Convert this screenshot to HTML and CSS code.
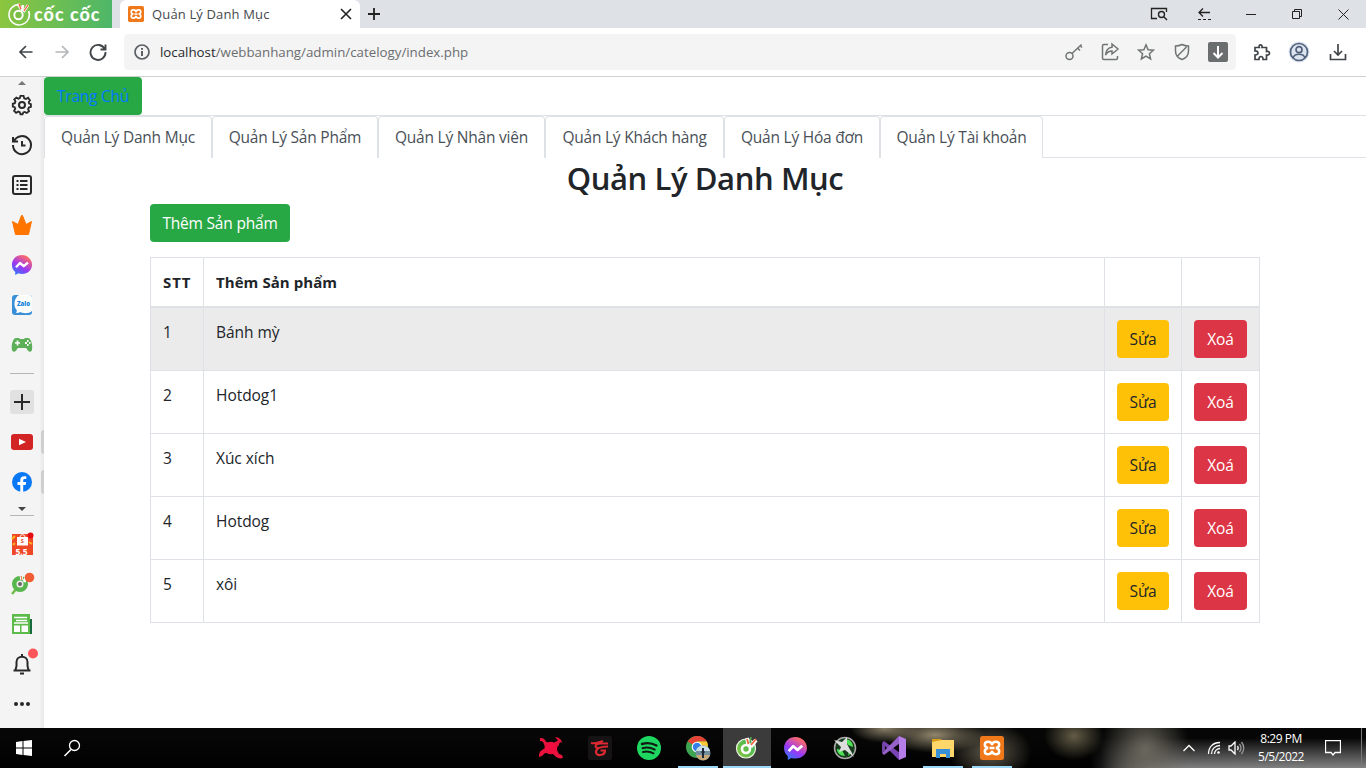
FILE: index.html
```html
<!DOCTYPE html>
<html lang="vi">
<head>
<meta charset="utf-8">
<title>Quản Lý Danh Mục</title>
<link rel="stylesheet" href="styles.css">
</head>
<body>
<svg class="defs" aria-hidden="true">
  <defs>
    <linearGradient id="msg" x1="0" y1="1" x2=".6" y2="0"><stop offset="0" stop-color="#1688ff"/><stop offset=".5" stop-color="#9a38f5"/><stop offset="1" stop-color="#ff6a68"/></linearGradient>
    <linearGradient id="leaf" x1="0" y1="1" x2="1" y2="0"><stop offset="0" stop-color="#8bc83e"/><stop offset="1" stop-color="#35b15b"/></linearGradient>
  </defs>
  <symbol id="messenger" viewBox="0 0 24 24"><path fill="url(#msg)" d="M12 1C5.700 1 1 5.600 1 11.600c0 3.400 1.400 6 3.600 7.900V23l3.500-1.900c1.200.4 2.500.6 3.900.6 6.300 0 11-4.500 11-10.100S18.300 1 12 1z"/><path fill="none" stroke="#fff" stroke-width="2.600" stroke-linejoin="round" d="M5.500 14.500l4.300-4.700 4.100 3.500 4.600-4"/></symbol>
  <symbol id="xampp" viewBox="0 0 24 24"><rect width="24" height="24" rx="2.500" fill="#f07819"/><path fill="none" stroke="#fff" stroke-width="2.500" d="M8 12C3.500 11 4 5.800 8 5.800c2.800 0 4 1.500 4 3.400 0-1.900 1.200-3.400 4-3.400 4 0 4.500 5.200 0 6.200 4.500 1 4 6.200 0 6.200-2.800 0-4-1.500-4-3.400 0 1.900-1.200 3.400-4 3.400-4 0-4.500-5.200 0-6.200zM9.500 12h5"/></symbol>
</svg>

<header class="tabstrip">
  <div class="brand">
    <svg width="26" height="26" viewBox="0 0 26 26"><path d="M14 3.500A10.200 10.200 0 1 0 22.700 10" fill="none" stroke="#fff" stroke-width="1.500"/><circle cx="12.500" cy="14" r="6.700" fill="#7abe46"/><circle cx="12.500" cy="14" r="4.200" fill="none" stroke="#fff" stroke-width="2"/><path d="M12 3l3 5M17 4l-1 6M22 4l-4.500 7" stroke="#fff" stroke-width="2.600"/><path d="M13 3l2 5M22 4l-4 6" stroke="#f15a3c" stroke-width="1.300"/></svg>
    <span class="brand-name">cốc cốc</span>
  </div>
  <div class="tab">
    <svg width="16" height="16"><use href="#xampp"/></svg>
    <span class="tab-title">Quản Lý Danh Mục</span>
    <svg class="line" width="12" height="12" viewBox="0 0 12 12"><path d="M1 1l10 10M11 1L1 11" stroke-width="1.600"/></svg>
  </div>
  <svg class="line newtab" width="14" height="14" viewBox="0 0 14 14"><path d="M7 1v12M1 7h12" stroke-width="1.800"/></svg>
  <div class="window-controls">
    <svg class="line" width="18" height="14" viewBox="0 0 18 14"><path d="M7 11.500H1.500v-10h15V5" stroke-width="1.300"/><circle cx="11.500" cy="7.500" r="3" stroke-width="1.400"/><path d="M14 10l3 3" stroke-width="1.400"/></svg>
    <svg class="line" width="16" height="14" viewBox="0 0 16 14"><path d="M13 5.500H2M6 1.500l-4 4 4 4" stroke-width="1.300"/><path d="M1 12.500h13" stroke-dasharray="3 2"/></svg>
    <svg class="line" width="10" height="10" viewBox="0 0 10 10"><path d="M0 5.500h10"/></svg>
    <svg class="line" width="10" height="10" viewBox="0 0 10 10"><path d="M.5 2.500h7v7h-7zM2.500 2.500v-2h7v7h-2"/></svg>
    <svg class="line" width="11" height="11" viewBox="0 0 11 11"><path d="M.5.500l10 10M10.500.500l-10 10"/></svg>
  </div>
</header>

<nav class="toolbar">
  <svg class="tool" width="16" height="16" viewBox="0 0 16 16"><path d="M14.500 8H2M8 2L2 8l6 6"/></svg>
  <svg class="tool off" width="16" height="16" viewBox="0 0 16 16"><path d="M1.500 8H14M8 2l6 6-6 6"/></svg>
  <svg class="tool reload" width="18" height="18" viewBox="0 0 18 18"><path d="M15.800 6.200A7.500 7.500 0 1 0 16.500 9M16.500 1.500v5h-5" stroke-width="1.900"/></svg>
  <div class="address">
    <svg class="tool info" width="16" height="16" viewBox="0 0 16 16"><circle cx="8" cy="8" r="7"/><path d="M8 7v5M8 4v1.800" stroke-width="2"/></svg>
    <span class="url"><b>localhost</b>/webbanhang/admin/catelogy/index.php</span>
    <div class="address-icons">
      <svg width="20" height="20" viewBox="0 0 20 20"><circle cx="5.500" cy="14" r="3.500"/><path d="M8 11.500L17.500 2.500M13.500 6l2.500 2.500M16 3.500l2 2"/></svg>
      <svg width="20" height="20" viewBox="0 0 20 20"><path d="M8 2.500H4A1.500 1.500 0 0 0 2.500 4v12A1.500 1.500 0 0 0 4 17.500h12a1.500 1.500 0 0 0 1.500-1.500v-2M12 2l6 5-6 5V9C8.500 9 7 10.500 5.500 13 6 8 8.500 5.500 12 5.200z"/></svg>
      <svg width="20" height="20" viewBox="0 0 20 20"><path d="M10 2.800l2.100 4.900 5.300.5-4 3.500 1.200 5.200L10 14.200l-4.600 2.700 1.200-5.200-4-3.500 5.300-.5z"/></svg>
      <svg width="20" height="20" viewBox="0 0 20 20"><path d="M10 2.500c2 1 4 1.500 6.500 1.500v5c0 4-2.500 7-6.500 8.500C6 16 3.500 13 3.500 9V4C6 4 8 3.500 10 2.500zM14.500 5l-9 9"/></svg>
      <svg width="20" height="20" viewBox="0 0 20 20"><rect width="20" height="20" rx="2" fill="#6a6e6e" stroke="none"/><path d="M10 4v11M5.500 11l4.500 4.500 4.500-4.500" stroke="#fff" stroke-width="2"/></svg>
    </div>
  </div>
  <div class="toolbar-end">
    <svg class="tool" width="20" height="20" viewBox="0 0 20 20"><path d="M3 5.500h4.300C6 2 11 2 10 5.500h4.500v4c4-1 4 4.200 0 3.500v4.500H11c.5-4-4.500-4-4 0H3V13c4 .3 4-4.500 0-4z"/></svg>
    <svg class="tool user" width="22" height="22" viewBox="0 0 22 22"><circle cx="11" cy="11" r="10.500" fill="#dce4f0" stroke="none"/><circle cx="11" cy="11" r="8.500"/><circle cx="11" cy="8.700" r="3"/><path d="M5 17c1.500-5 10.500-5 12 0"/></svg>
    <svg class="tool" width="18" height="18" viewBox="0 0 18 18"><path d="M9 1v11M5 8l4 4 4-4M1.500 11v5.500h15V11"/></svg>
  </div>
</nav>

<div class="workspace">
  <aside class="sidebar">
    <div class="slot up"><svg width="8" height="4" viewBox="0 0 8 4"><path fill="#777" d="M0 4l4-4 4 4z"/></svg></div>
    <div class="slot"><svg class="side" width="22" height="22" viewBox="0 0 22 22"><path d="M9.300 1.500h3.400l.7 2.600 2 .8L17.700 3.500l2 2.800-1.300 2.200.4 1.500 2 .6v3l-2.300.8-.8 1.800 1 2.200-2.500 1.900-2.200-1.200-1.600.6-.8 2H9.300l-.7-2.200-1.800-.7-2.300 1.300-2.200-2.200 1.300-2.300-.7-1.700-2-.7v-3l2.200-.7.7-1.700-1.300-2.300 2.300-2 2.200 1.100 1.600-.6z" transform="translate(1 .5) scale(.91)"/><circle cx="11" cy="11" r="3"/></svg></div>
    <div class="slot"><svg class="side" width="22" height="22" viewBox="0 0 22 22"><path d="M2 3v4.500h5M3 7a9 9 0 1 1-1 4M11 7v4.500h3.500"/></svg></div>
    <div class="slot"><svg class="side" width="22" height="22" viewBox="0 0 22 22"><rect x="2" y="2" width="18" height="18" rx="2"/><path d="M5.500 7h2M9 7h7.500M5.500 11h2M9 11h7.500M5.500 15h2M9 15h7.500"/></svg></div>
    <div class="slot"><svg width="22" height="22" viewBox="0 0 22 22"><path fill="#ff7500" stroke="#ff7500" stroke-linejoin="round" d="M1.500 7.500l5.500 3 3.500-9h1l3.500 9 5.500-3L17.500 20.500h-13z"/></svg></div>
    <div class="slot"><svg width="22" height="22"><use href="#messenger"/></svg></div>
    <div class="slot"><svg width="20" height="20" viewBox="0 0 20 20"><rect width="20" height="20" rx="3" fill="#388fd7"/><path fill="#fff" d="M7 0h10a3 3 0 0 1 3 3v13c-3 3-9 2.500-12 1-2 1.300-3.500 1-4 .8 1-1 1-2 .5-3C1 11 2 3 7 0z"/><text x="5" y="11" font-family="Open Sans" font-size="6" font-weight="800" textLength="13" fill="#1684d8">Zalo</text></svg></div>
    <div class="slot"><svg width="22" height="16" viewBox="0 0 22 16"><path fill="#5daf59" d="M5 1h3l1 1h4l1-1h3c3 0 5 7 4 12-1 3-4 2-5-1l-1-1H7l-1 1c-1 3-4 4-5 1C0 8 2 1 5 1z"/><path stroke="#fff" stroke-width="1.600" d="M4 6h5M6.500 3.500v5"/><path fill="#fff" d="M14 5h2v2h-2zM16 3h1.500v2H16zM16 7h1.500v2H16zM18 5h1.500v2H18z"/></svg></div>
    <div class="slot rule"><hr></div>
    <div class="slot"><div class="plus"><svg class="side" width="16" height="16" viewBox="0 0 16 16"><path d="M8 0v16M0 8h16"/></svg></div></div>
    <div class="slot marked"><svg width="22" height="16" viewBox="0 0 22 16"><rect width="22" height="16" rx="3" fill="#d22325"/><path fill="#fff" d="M8 4.800v6.400L15 8z"/></svg></div>
    <div class="slot marked"><svg width="20" height="20" viewBox="0 0 20 20"><circle cx="10" cy="10" r="10" fill="#0878f4"/><path fill="#fff" d="M8.300 20v-7H5.500v-3h2.800V8c0-3 1.700-4.300 6-3.700V7h-1.500c-1.300 0-1.600.6-1.600 1.500V10h3l-.6 3h-2.400v7z"/></svg></div>
    <div class="slot more"><svg width="8" height="4" viewBox="0 0 8 4"><path fill="#444" d="M0 0h8L4 4z"/></svg><hr></div>
    <div class="slot"><svg width="22" height="24" viewBox="0 0 22 24"><rect x="1" y="1" width="21" height="21" fill="#ee4827"/><path stroke="#ffb21c" stroke-width="2" d="M1 6l3-3M2 12l2-2M18 9l3 2"/><path fill="#fff" d="M6 4h11v8.500H6z"/><path d="M9 4c0-3 5-3 5 0" fill="none" stroke="#fff"/><text x="9.800" y="9.800" font-family="Open Sans" font-size="5.500" font-weight="700" fill="#e4432d">S</text><text x="4.500" y="21.500" font-family="Open Sans" font-size="8.500" font-weight="700" fill="#fff">5.5</text><circle cx="19.500" cy="2.500" r="3" fill="#e50c12"/></svg></div>
    <div class="slot"><svg width="26" height="26" viewBox="0 0 26 26"><path d="M3 22l5-6" stroke="#72bd48" stroke-width="2.500"/><circle cx="11" cy="12" r="5.500" fill="none" stroke="#58b64e" stroke-width="5"/><circle cx="11" cy="12" r="3.500" fill="#eee"/><circle cx="11" cy="12" r="2" fill="#666"/><path d="M12 4l1 4M17 6l-2 4" stroke="#fff" stroke-width="3"/><path d="M12 4l1 4" stroke="#f15e35"/><circle cx="20.500" cy="5.500" r="4.800" fill="#f15e35"/></svg></div>
    <div class="slot"><svg width="20" height="22" viewBox="0 0 20 22"><path fill="#176b3e" d="M17 5h3v15h-3z"/><path fill="#5dbb4c" d="M0 0h18v20H0z"/><path stroke="#fff" stroke-width="1.300" d="M2 3.500h13M4 6.500h11M2 9h14"/><path fill="#fff" d="M2 11.500h6V18H2zM9.500 11.500H16V18H9.500z"/></svg></div>
    <div class="slot"><svg class="side" width="26" height="34" viewBox="0 0 26 34"><path d="M4.500 22.500h17M6.500 22l1-4v-4c0-7 11-7 11 0v4l1 4M13 8V6M11 25.500h4"/><circle cx="24" cy="5.500" r="5" fill="#ff565c" stroke="none"/></svg></div>
    <div class="slot"><svg width="16" height="6" viewBox="0 0 16 6"><g fill="#262626"><circle cx="2" cy="2" r="2"/><circle cx="8" cy="2" r="2"/><circle cx="14" cy="2" r="2"/></g></svg></div>
  </aside>

  <main class="page">
    <a class="btn home">Trang Chủ</a>
    <ul class="nav">
      <li class="w1"><a>Quản Lý Danh Mục</a></li>
      <li class="w2"><a>Quản Lý Sản Phẩm</a></li>
      <li class="w3"><a>Quản Lý Nhân viên</a></li>
      <li class="w4"><a>Quản Lý Khách hàng</a></li>
      <li class="w5"><a>Quản Lý Hóa đơn</a></li>
      <li class="w6"><a>Quản Lý Tài khoản</a></li>
    </ul>
    <div class="container">
      <h2>Quản Lý Danh Mục</h2>
      <a class="btn add">Thêm Sản phẩm</a>
      <table>
        <colgroup><col class="c-id"><col><col class="c-edit"><col class="c-delete"></colgroup>
        <thead><tr><th class="id">STT</th><th>Thêm Sản phẩm</th><th></th><th></th></tr></thead>
        <tbody>
          <tr class="hover"><td>1</td><td>Bánh mỳ</td><td><a class="btn edit">Sửa</a></td><td><a class="btn delete">Xoá</a></td></tr>
          <tr><td>2</td><td>Hotdog1</td><td><a class="btn edit">Sửa</a></td><td><a class="btn delete">Xoá</a></td></tr>
          <tr><td>3</td><td>Xúc xích</td><td><a class="btn edit">Sửa</a></td><td><a class="btn delete">Xoá</a></td></tr>
          <tr><td>4</td><td>Hotdog</td><td><a class="btn edit">Sửa</a></td><td><a class="btn delete">Xoá</a></td></tr>
          <tr><td>5</td><td>xôi</td><td><a class="btn edit">Sửa</a></td><td><a class="btn delete">Xoá</a></td></tr>
        </tbody>
      </table>
    </div>
  </main>
</div>

<footer class="taskbar">
  <div class="system">
    <div><svg width="16" height="16" viewBox="0 0 16 16"><path fill="#fff" d="M0 2l6.500-1v6.500H0zM7.500.900L16 0v7.500H7.500zM0 8.500h6.500V15L0 14zM7.500 8.500H16V16l-8.500-1z"/></svg></div>
    <div><svg class="tray-icon" width="18" height="18" viewBox="0 0 18 18"><circle cx="11.500" cy="6.500" r="5"/><path d="M8 10.500L1.500 17" stroke-width="1.600"/></svg></div>
  </div>
  <div class="apps">
    <div class="app"><svg width="26" height="24" viewBox="0 0 26 24"><circle cx="13" cy="12" r="6.300" fill="#f20d3f"/><path fill="#e8133d" d="M2 2c3-.5 5 1 6 4l3 .5-4 5C6 7 5 5 2 5zM17 1c4 0 7 3 7 6l-2-1-2 5-4-4.500 4-2zM1 21c-.5-3 1-6 3-7l3-2 4 5.500-4-.5-3 3zM25 22c-3 1-6 0-8-2l-2-2 4-4 2 4 3 1z"/></svg></div>
    <div class="app"><svg width="24" height="24" viewBox="0 0 24 24"><rect width="24" height="24" rx="2" fill="#151313"/><path fill="none" stroke="#dc2933" stroke-width="2" d="M3 7c5 1 8-1 12-2M20 7.500h-8c-5 0-6 4.500-2 4.500"/><path fill="none" stroke="#dc2933" stroke-width="2.200" d="M20 10.500c-8 0-12 2-12 5.500 0 4.500 9 4 9-1.500h-4.500"/></svg></div>
    <div class="app"><svg width="24" height="24" viewBox="0 0 24 24"><circle cx="12" cy="12" r="12" fill="#1ed760"/><path fill="none" stroke="#101b13" stroke-linecap="round" d="M5 8c5-1.500 10-1 14.500 1.500" stroke-width="2.400"/><path fill="none" stroke="#101b13" stroke-linecap="round" d="M5.500 12.200c4-1.200 8.500-.6 12.300 1.400M6 16c4-1 7-.5 10.500 1.300" stroke-width="2"/></svg></div>
    <div class="app open"><svg width="26" height="26" viewBox="0 0 26 26"><circle cx="12" cy="12" r="11" fill="#3da452"/><path fill="#e44335" d="M12 12L2.500 6.500C7-1 18-1 22 6.500H12z"/><path fill="#fcc934" d="M12 12l4 2.500L12 23c8 0 13-9 10-16.500H12z"/><circle cx="12" cy="12" r="5.300" fill="#fff"/><circle cx="12" cy="12" r="4.200" fill="#3480e8"/><circle cx="18" cy="18" r="7.500" fill="#718d9e"/><path fill="#c7a877" d="M11 20h14c-2 7-12 7-14 0z"/><path fill="#c7dce7" d="M11 16c1-7 13-7 14 0z"/><path stroke="#1e2837" stroke-width="2" d="M18 13v10"/><path stroke="#1e2837" d="M16 17h4"/></svg></div>
    <div class="app open active"><svg width="24" height="24" viewBox="0 0 24 24"><circle cx="11" cy="12.500" r="9.500" fill="url(#leaf)" stroke="#ecf4e4" stroke-width="1.200"/><circle cx="11" cy="13" r="4" fill="none" stroke="#fff" stroke-width="2.600"/><path stroke="#fff" stroke-width="4" d="M12 2l1.500 7M21 4l-5.500 7"/><path stroke="#f06842" stroke-width="1.800" d="M12 3l1.500 5M21 3l-5 6"/><path stroke="#4daf51" stroke-width="1.500" d="M16 1l-1 6"/></svg></div>
    <div class="app"><svg width="25" height="25"><use href="#messenger"/></svg></div>
    <div class="app"><svg width="24" height="24" viewBox="0 0 24 24"><circle cx="12" cy="12" r="10.500" fill="#173b1c" stroke="#aaa" stroke-width="1.500"/><path fill="#4ee456" d="M12 3c5 0 8 4 8 8l-5-2zM4 13l5 1 3 6c-5 0-8-3-8-7zM16 15l3 1-4 4z"/><path fill="#ddd" d="M1 4l8 2 5-5v7l7 13-9-7-6 2 2-5z"/></svg></div>
    <div class="app"><svg width="24" height="24" viewBox="0 0 24 24"><path fill="#7945b4" d="M0 7l2-2 16 12v5L17 24 0 7z"/><path fill="#9661ca" d="M0 17l2 2L18 7V2l-1-2L0 17z"/><path fill="#b57de7" d="M17 0l7 3v18l-7 3z"/><path fill="#7245a3" d="M0 7l3 2v6l-3 2z"/></svg></div>
    <div class="app open"><svg width="22" height="20" viewBox="0 0 22 20"><path fill="#db9d18" d="M0 1h9l2 3H0z"/><path fill="#ffd66a" d="M0 4l10-2h12v17H0z"/><path fill="#368fd7" d="M4 11h14v9h-4v-4H8v4H4z"/></svg></div>
    <div class="app open"><svg width="24" height="24"><use href="#xampp"/></svg></div>
  </div>
  <div class="tray">
    <svg class="tray-icon" width="12" height="8" viewBox="0 0 12 8"><path d="M.5 7L6 1.500 11.500 7"/></svg>
    <svg class="tray-icon" width="14" height="14" viewBox="0 0 14 14"><path d="M1.500 13C1.500 6 6 1.500 13 1.500M4.500 13c0-5 3.500-8.500 8.500-8.500M7.500 13c0-3 2.500-5.500 5.500-5.500"/><circle cx="11.500" cy="11.500" r="1.300" fill="#fff" stroke="none"/></svg>
    <svg class="tray-icon" width="17" height="14" viewBox="0 0 17 14"><path d="M1 5h2l4-4v12L3 9H1z"/><path d="M9.500 5q1.500 2 0 4"/><path d="M11.500 3q3 4 0 8M13.500 1q4.500 6 0 12" stroke="#999"/></svg>
    <div class="clock"><span>8:29 PM</span><span>5/5/2022</span></div>
    <svg class="tray-icon" width="16" height="16" viewBox="0 0 16 16"><path d="M.5.500h15v12H10L8 15l-2-2.500H.5z"/></svg>
  </div>
</footer>
</body>
</html>
```
FILE: styles.css
```css
* { box-sizing: border-box; }
body {
  margin: 0;
  height: 768px;
  display: grid;
  grid-template-rows: 28px 49px 651px 40px;
  overflow: hidden;
  font-family: "Open Sans", "Noto Sans", sans-serif;
  font-size: 15.5px;
  line-height: 24px;
  color: #212529;
  background: #fff;
}
svg { display: block; flex: none; }
.defs { position: absolute; width: 0; height: 0; }

/* Browser window */
.tabstrip { display: flex; align-items: center; background: #dee1e6; }
.brand {
  display: flex;
  align-items: center;
  gap: 2px;
  width: 112px;
  height: 28px;
  padding-left: 6px;
  color: #fff;
  background: linear-gradient(100deg, #8dc63d, #4cb66a);
}
.brand-name { font: 900 18px/24px Lato, sans-serif; letter-spacing: 1px; white-space: nowrap; }
.tab {
  display: flex;
  align-items: center;
  width: 240px;
  height: 28px;
  margin-left: 8px;
  padding: 0 8px;
  background: #fff;
  border-radius: 6px 6px 0 0;
}
.tab-title { flex: 1; padding-left: 8px; font-size: 13px; letter-spacing: 0.15px; color: #45484c; }
.line { fill: none; stroke: #222; stroke-width: 1; }
.newtab { margin-left: 7px; }
.window-controls {
  margin-left: auto;
  display: grid;
  grid-template-columns: repeat(5, 46px);
  justify-items: center;
  align-items: center;
}
.toolbar {
  display: flex;
  align-items: center;
  padding-left: 18px;
  border-bottom: 1px solid #d0d0d0;
}
.tool { fill: none; stroke: #414549; stroke-width: 1.7; margin-right: 20px; }
.tool.off { stroke: #b4b6b8; margin-right: 19px; }
.tool.reload { margin-right: 17px; }
.address {
  display: flex;
  align-items: center;
  width: 1112px;
  height: 36px;
  padding: 0 8px 0 10px;
  border-radius: 4px;
  background: #f4f4f4;
}
.tool.info { margin-right: 10px; stroke: #5c6065; }
.url { font-size: 13.3px; color: #6b6e71; }
.url b { font-weight: 400; color: #27292c; }
.address-icons { display: flex; gap: 16px; margin-left: auto; fill: none; stroke: #707474; stroke-width: 1.5; }
.toolbar-end { display: flex; align-items: center; flex: 1; padding: 0 19px 0 16px; }
.toolbar-end .tool { margin: 0; }
.toolbar-end .user { margin: 0 auto 0 16px; }
.tool.user { stroke: #52617a; }

/* Side panel */
.workspace { display: grid; grid-template-columns: 44px 1fr; min-height: 0; }
.sidebar { background: linear-gradient(90deg, #f4f4f4 39px, #e8e8e8); }
.slot { height: 40px; display: flex; align-items: center; justify-content: center; }
.slot svg { overflow: visible; }
.side { fill: none; stroke: #292929; stroke-width: 2; }
.slot.up { height: 8px; align-items: flex-end; }
.slot hr { width: 24px; height: 1px; margin: 0; border: 0; background: #b5b5b5; }
.slot.rule { height: 17px; }
.slot.more { height: 23px; flex-direction: column; gap: 4px; justify-content: flex-start; padding-top: 5px; }
.plus { width: 24px; height: 24px; display: grid; place-items: center; background: #e1e1e1; border-radius: 3px; }
.marked { padding-left: 11px; justify-content: space-between; }
.marked svg { width: 22px; }
.marked::after { content: ""; width: 3px; height: 24px; border-radius: 3px 0 0 3px; background: #cfcfcf; }

/* Page */
.page { background: #fff; }
.btn {
  display: block;
  height: 38px;
  padding: 7px 0;
  border-radius: 4px;
  text-align: center;
  white-space: nowrap;
}
.home { width: 98px; color: #007bff; background: #28a745; letter-spacing: -0.25px; }
.nav {
  display: flex;
  height: 43px;
  margin: 0;
  padding: 0;
  list-style: none;
  border-top: 1px solid #dee2e6;
  border-bottom: 1px solid #dee2e6;
}
.nav li {
  height: 42px;
  padding: 8px 0;
  text-align: center;
  white-space: nowrap;
  letter-spacing: -0.22px;
  color: #495057;
  background: #fff;
  border: 1px solid #dee2e6;
  border-bottom: 0;
  border-radius: 4px 4px 0 0;
}
.w1 { width: 168px; }
.w2 { width: 166px; }
.w3 { width: 167px; }
.w4 { width: 179px; }
.w5 { width: 156px; }
.w6 { width: 163px; }
.container { width: 1110px; margin-left: 106px; }
h2 {
  height: 46px;
  margin: 0;
  padding-top: 1px;
  font-size: 31px;
  line-height: 38px;
  font-weight: 600;
  letter-spacing: -0.4px;
  text-align: center;
}
.add { width: 140px; color: #fff; background: #28a745; letter-spacing: -0.2px; }
table { width: 1110px; margin-top: 15px; border-collapse: collapse; table-layout: fixed; }
.c-id { width: 53px; }
.c-edit { width: 77px; }
.c-delete { width: 78px; }
th, td { padding: 12px; border: 1px solid #dee2e6; text-align: left; vertical-align: top; white-space: nowrap; }
th { height: 49px; font-weight: 700; font-size: 15px; border-bottom-width: 2px; letter-spacing: 0.07px; }
.id { letter-spacing: 0.9px; }
td { height: 63px; letter-spacing: -0.05px; }
.hover { background: #ebebeb; }
.edit { width: 52px; background: #ffc107; }
.delete { width: 53px; color: #fff; background: #dc3545; }
.edit, .delete { letter-spacing: -0.2px; }

/* Taskbar */
.taskbar {
  display: grid;
  grid-template-columns: 526px 490px 1fr;
  background:
    radial-gradient(ellipse 35px 15px at 885px 0, #8c816a, transparent),
    radial-gradient(ellipse 50px 18px at 935px 7px, #91866d, transparent),
    radial-gradient(ellipse 42px 30px at 990px 24px, #625b4c, transparent),
    radial-gradient(ellipse 30px 24px at 1074px 8px, #625b45, transparent),
    radial-gradient(ellipse 45px 50px at 1145px 22px, #6a675c, transparent),
    linear-gradient(#050605 10px, transparent 42px),
    linear-gradient(90deg, #000 1090px, #858585 1150px, #8b8b8b);
}
.system { display: grid; grid-template-columns: 48px 48px; }
.system div, .app { display: grid; place-items: center; }
.apps { display: grid; grid-template-columns: repeat(10, 49px); }
.app.open { background: linear-gradient(#9bd8f7, #9bd8f7) center bottom / 40px 2px no-repeat; }
.app.active { width: 48px; margin-left: 1px; background: linear-gradient(#9bd8f7, #9bd8f7) center bottom / 48px 2px no-repeat #3b3b3b; }
.tray {
  display: grid;
  grid-template-columns: 24px 26px 19px 70px 34px;
  align-items: center;
  justify-items: center;
  padding-left: 161px;
  border-right: 1px solid #777;
  margin-right: 4px;
}
.tray-icon { fill: none; stroke: #fff; stroke-width: 1.3; }
.clock { display: grid; justify-items: center; font-size: 12px; line-height: 18px; letter-spacing: -0.5px; color: #fff; }
```
